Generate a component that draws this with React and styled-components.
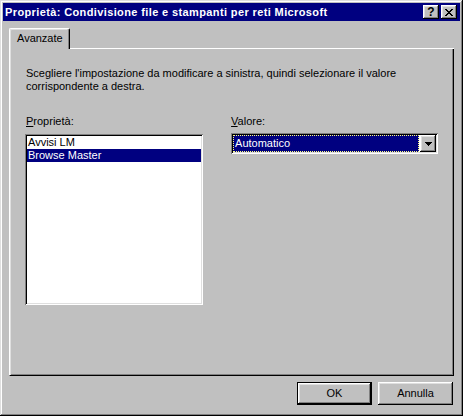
import React from "react";
import styled, { createGlobalStyle, css } from "styled-components";

const Global = createGlobalStyle`
  html, body { margin: 0; padding: 0; background: #c0c0c0; }
  body { font-family: "Liberation Sans", Arial, sans-serif; font-size: 11px; color: #000; }
  * { box-sizing: border-box; }
`;

const raised = css`
  box-shadow: inset -1px -1px #000, inset 1px 1px #fff, inset -2px -2px #808080, inset 2px 2px #dfdfdf;
`;

const sunken = css`
  box-shadow: inset 1px 1px #808080, inset -1px -1px #fff, inset 2px 2px #000, inset -2px -2px #dfdfdf;
`;

const Window = styled.div`
  width: 463px;
  height: 416px;
  background: #c0c0c0;
  padding: 3px;
  display: flex;
  flex-direction: column;
  box-shadow: inset -1px -1px #000, inset 1px 1px #dfdfdf, inset -2px -2px #808080, inset 2px 2px #fff;
`;

const TitleBar = styled.div`
  height: 18px;
  flex: none;
  background: #000080;
  color: #fff;
  display: flex;
  align-items: center;
  padding: 0 3px 0 2px;
`;

const TitleText = styled.div`
  font-weight: bold;
  font-size: 11px;
  line-height: 13px;
  letter-spacing: 0.38px;
  white-space: nowrap;
`;

const TitleButtons = styled.div`
  margin-left: auto;
  display: flex;
  gap: 2px;
`;

const TitleButton = styled.div`
  width: 16px;
  height: 14px;
  background: #c0c0c0;
  ${raised};
  display: flex;
  align-items: center;
  justify-content: center;
  color: #000;
  font-weight: bold;
  font-size: 12px;
  line-height: 12px;
`;

const Body = styled.div`
  flex: 1;
  display: flex;
  flex-direction: column;
  padding: 7px 6px 8px 6px;
`;

const TabStrip = styled.div`
  height: 21px;
  flex: none;
  display: flex;
`;

const Tab = styled.div`
  width: 61px;
  border-left: 1px solid #fff;
  border-top: 1px solid #fff;
  border-right: 1px solid #000;
  border-top-left-radius: 2px;
  border-top-right-radius: 2px;
  box-shadow: inset -1px 0 #808080, inset 1px 1px #dfdfdf;
  padding: 3px 0 0 7px;
  line-height: 13px;
`;

const TabFiller = styled.div`
  flex: 1;
  border-bottom: 1px solid #fff;
`;

const Panel = styled.div`
  flex: 1;
  border-left: 1px solid #fff;
  border-right: 1px solid #000;
  border-bottom: 1px solid #000;
  box-shadow: inset 1px 0 #dfdfdf, inset -1px -1px #808080;
  padding: 18px 15px 0 15px;
`;

const Instruction = styled.p`
  margin: 0 0 0 1px;
  line-height: 13px;
  white-space: nowrap;
`;

const Fields = styled.div`
  margin-top: 22px;
  display: flex;
  gap: 28px;
`;

const Column = styled.div`
  display: flex;
  flex-direction: column;
  width: ${(p) => p.$w}px;
`;

const Label = styled.label`
  display: block;
  line-height: 13px;
  height: 13px;
  margin: 0 0 ${(p) => p.$gap}px ${(p) => p.$indent || 0}px;
`;

const ListBox = styled.div`
  height: 171px;
  background: #fff;
  ${sunken};
  padding: 2px;
`;

const ListItem = styled.div`
  height: 13px;
  line-height: 13px;
  padding-left: 1px;
  white-space: nowrap;
  background: ${(p) => (p.$selected ? "#000080" : "transparent")};
  color: ${(p) => (p.$selected ? "#fff" : "#000")};
`;

const Combo = styled.div`
  height: 21px;
  background: #fff;
  ${sunken};
  padding: 2px;
  display: flex;
  gap: 1px;
`;

const ComboValue = styled.div`
  flex: 1;
  background: #000080;
  color: #fff;
  border: 1px dotted #ffff7f;
  padding-left: 1px;
  display: flex;
  align-items: center;
  line-height: 13px;
`;

const DropButton = styled.div`
  width: 16px;
  height: 17px;
  background: #c0c0c0;
  ${raised};
  display: flex;
  align-items: center;
  justify-content: center;
`;

const Footer = styled.div`
  flex: none;
  margin-top: 6px;
  height: 23px;
  display: flex;
  justify-content: flex-end;
  gap: 6px;
  padding-right: 1px;
`;

const Button = styled.button`
  width: 75px;
  height: 23px;
  background: #c0c0c0;
  font-family: "Liberation Sans", Arial, sans-serif;
  font-size: 11px;
  line-height: 13px;
  color: #000;
  padding: 0;
  border: ${(p) => (p.$default ? "1px solid #000" : "none")};
  ${raised};
`;

const CloseIcon = () => (
  <svg width="8" height="7" viewBox="0 0 8 7" shapeRendering="crispEdges">
    <path
      fill="#000"
      d="M0 0h2v1H0zM6 0h2v1H6zM1 1h2v1H1zM5 1h2v1H5zM2 2h4v1H2zM3 3h2v1H3zM2 4h4v1H2zM1 5h2v1H1zM5 5h2v1H5zM0 6h2v1H0zM6 6h2v1H6z"
    />
  </svg>
);

const ArrowIcon = () => (
  <svg width="7" height="4" viewBox="0 0 7 4" shapeRendering="crispEdges">
    <path fill="#000" d="M0 0h7v1H0zM1 1h5v1H1zM2 2h3v1H2zM3 3h1v1H3z" />
  </svg>
);

export default function App() {
  return (
    <>
      <Global />
      <Window>
        <TitleBar>
          <TitleText>Proprietà: Condivisione file e stampanti per reti Microsoft</TitleText>
          <TitleButtons>
            <TitleButton>?</TitleButton>
            <TitleButton>
              <CloseIcon />
            </TitleButton>
          </TitleButtons>
        </TitleBar>
        <Body>
          <TabStrip>
            <Tab>Avanzate</Tab>
            <TabFiller />
          </TabStrip>
          <Panel>
            <Instruction>
              Scegliere l'impostazione da modificare a sinistra, quindi selezionare il valore
              <br />
              corrispondente a destra.
            </Instruction>
            <Fields>
              <Column $w={179}>
                <Label $gap={6} $indent={1}>
                  <u>P</u>roprietà:
                </Label>
                <ListBox>
                  <ListItem>Avvisi LM</ListItem>
                  <ListItem $selected>Browse Master</ListItem>
                </ListBox>
              </Column>
              <Column $w={208}>
                <Label $gap={5}>
                  <u>V</u>alore:
                </Label>
                <Combo>
                  <ComboValue>Automatico</ComboValue>
                  <DropButton>
                    <ArrowIcon />
                  </DropButton>
                </Combo>
              </Column>
            </Fields>
          </Panel>
          <Footer>
            <Button $default>OK</Button>
            <Button>Annulla</Button>
          </Footer>
        </Body>
      </Window>
    </>
  );
}
